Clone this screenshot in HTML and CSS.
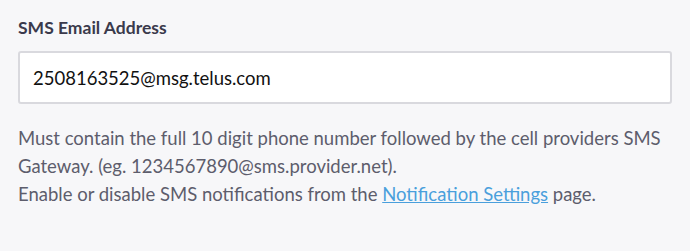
FILE: index.html
```html
<!DOCTYPE html>
<html>
<head>
<meta charset="utf-8">
<link rel="stylesheet" href="styles.css">
</head>
<body>
<div class="field">
  <label class="label" for="sms">SMS Email Address</label>
  <input class="input" id="sms" type="text" value="2508163525@msg.telus.com">
  <p class="help">Must contain the full 10 digit phone number followed by the cell providers SMS Gateway. (eg. 1234567890@sms.provider.net).<br>Enable or disable SMS notifications from the <a class="link" href="#">Notification Settings</a> page.</p>
</div>
</body>
</html>
```
FILE: styles.css
```css
html, body {
  margin: 0;
  background: #f7f7f9;
}
body {
  font-family: Lato, "Noto Sans", sans-serif;
}
.field {
  display: flex;
  flex-direction: column;
  padding: 18px 18px 0 18px;
}
.label {
  font-size: 17.5px;
  font-weight: 700;
  line-height: 20px;
  color: #3a3a4c;
}
.input {
  margin-top: 13px;
  box-sizing: border-box;
  width: 654px;
  height: 53px;
  border: 2px solid #d9d9de;
  border-radius: 3px;
  background: #fff;
  padding: 0 12px 0 13px;
  font-family: Lato, "Noto Sans", sans-serif;
  font-size: 18.5px;
  color: #111;
  outline: none;
}
.help {
  margin: 20px 0 0 0;
  font-size: 18.5px;
  line-height: 28px;
  color: #5d5d6c;
}
.link {
  color: #4a9fdc;
  text-decoration: underline;
}
```
